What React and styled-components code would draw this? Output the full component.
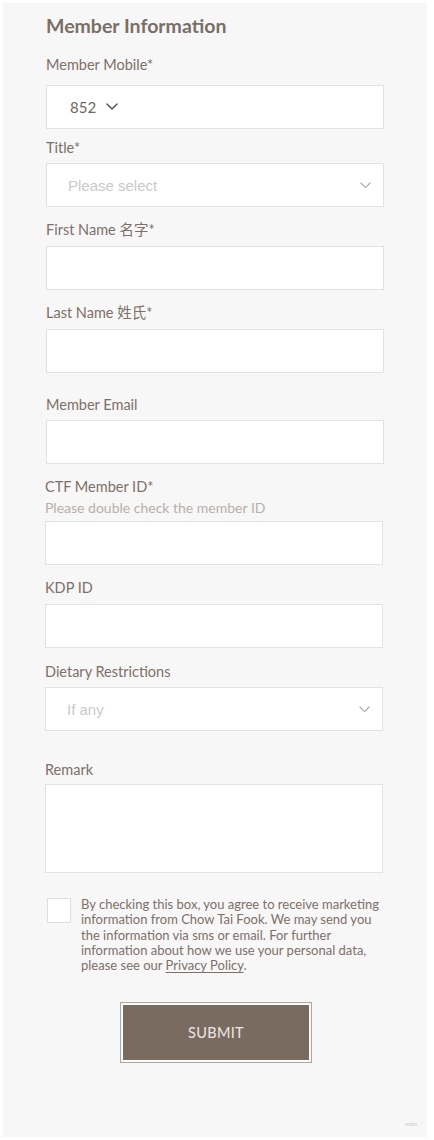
import styled, { createGlobalStyle } from "styled-components";

const Global = createGlobalStyle`
    html, body {
        margin: 0;
        padding: 0;
        background: #ffffff;
    }
    * {
        box-sizing: border-box;
    }
`;

const Pagina = styled.div`
    padding: 3px 7px 3px 3px;
`;

const Panel = styled.div`
    position: relative;
    background: #f7f7f7;
    height: 1134px;
    padding: 11px 0 0 43px;
    font-family: "Lato", "Noto Sans CJK SC", sans-serif;
    color: #7d7069;
`;

const Titulo = styled.h2`
    margin: 0;
    font-size: 19.5px;
    line-height: 24px;
    font-weight: 700;
    color: #7a6e67;
`;

const Campo = styled.div`
    margin-top: ${({ $top }) => $top}px;
    margin-left: ${({ $shift }) => $shift || 0}px;
    width: 338px;
`;

const Etiqueta = styled.div`
    font-size: 14.5px;
    line-height: 20px;
    margin-bottom: ${({ $bottom }) => $bottom}px;
`;

const Ayuda = styled.div`
    font-size: 14px;
    line-height: 20px;
    color: #b9afa9;
    margin-bottom: 3px;
`;

const Entrada = styled.input`
    display: block;
    width: 100%;
    height: 44px;
    background: #ffffff;
    border: 1px solid #e2e2e2;
    border-radius: 0;
    outline: none;
    padding: 0 20px;
    font-family: "Liberation Sans", sans-serif;
    font-size: 15px;
`;

const AreaTexto = styled.textarea`
    display: block;
    width: 100%;
    height: 89px;
    background: #ffffff;
    border: 1px solid #e2e2e2;
    border-radius: 0;
    outline: none;
    resize: none;
    padding: 10px 20px;
`;

const Selector = styled.div`
    display: flex;
    align-items: center;
    justify-content: ${({ $compact }) => ($compact ? "flex-start" : "space-between")};
    gap: 10px;
    height: 44px;
    background: #ffffff;
    border: 1px solid #e2e2e2;
    padding: ${({ $compact }) => ($compact ? "0 0 0 23px" : "0 12px 0 21px")};
`;

const Marcador = styled.span`
    font-family: "Liberation Sans", sans-serif;
    font-size: 15px;
    color: #c9c9c9;
`;

const Codigo = styled.span`
    font-family: "Lato", sans-serif;
    font-size: 15px;
    color: #6f6661;
`;

const Consentimiento = styled.label`
    display: flex;
    align-items: flex-start;
    gap: 10px;
    margin-top: 25px;
    margin-left: 1px;
`;

const Casilla = styled.span`
    flex: none;
    width: 24px;
    height: 25px;
    background: #ffffff;
    border: 1px solid #dedede;
`;

const TextoLegal = styled.p`
    margin: -1px 0 0;
    font-size: 13px;
    line-height: 15.3px;
    white-space: nowrap;
    color: #7d7069;
`;

const Enlace = styled.a`
    color: inherit;
    text-decoration: underline;
    text-underline-offset: 2px;
`;

const ZonaBoton = styled.div`
    display: flex;
    justify-content: center;
    margin: 31px 0 0 -43px;
    padding-left: 2px;
`;

const Boton = styled.button`
    width: 188px;
    height: 57px;
    background: #7a6b61;
    border: 1px solid #ffffff;
    outline: 1px solid #b1a79f;
    outline-offset: 1px;
    color: #ece7e3;
    font-family: "Lato", sans-serif;
    font-size: 14.5px;
    letter-spacing: 0.3px;
    cursor: pointer;
`;

const Marca = styled.span`
    position: absolute;
    right: 10px;
    bottom: 10px;
    font-family: "Liberation Sans", sans-serif;
    font-size: 6px;
    color: #c6c6c6;
`;

function Chevron({ color = "#a9a9a9", size = 11, stroke = 1.2 }) {
    return (
        <svg width={size} height={size * 0.6} viewBox="0 0 12 7" fill="none">
            <path d="M1 1l5 5 5-5" stroke={color} strokeWidth={stroke} strokeLinecap="round" strokeLinejoin="round" />
        </svg>
    );
}

export default function App() {
    return (
        <Pagina>
            <Global />
            <Panel>
                <Titulo>Member Information</Titulo>

                <Campo $top={17}>
                    <Etiqueta $bottom={10}>Member Mobile*</Etiqueta>
                    <Selector $compact>
                        <Codigo>852</Codigo>
                        <Chevron color="#5f5652" size={12} stroke={1.5} />
                    </Selector>
                </Campo>

                <Campo $top={9}>
                    <Etiqueta $bottom={5}>Title*</Etiqueta>
                    <Selector>
                        <Marcador>Please select</Marcador>
                        <Chevron />
                    </Selector>
                </Campo>

                <Campo $top={13}>
                    <Etiqueta $bottom={6}>First Name 名字*</Etiqueta>
                    <Entrada type="text" />
                </Campo>

                <Campo $top={13}>
                    <Etiqueta $bottom={6}>Last Name 姓氏*</Etiqueta>
                    <Entrada type="text" />
                </Campo>

                <Campo $top={22}>
                    <Etiqueta $bottom={5}>Member Email</Etiqueta>
                    <Entrada type="email" />
                </Campo>

                <Campo $top={13} $shift={-1}>
                    <Etiqueta $bottom={1}>CTF Member ID*</Etiqueta>
                    <Ayuda>Please double check the member ID</Ayuda>
                    <Entrada type="text" />
                </Campo>

                <Campo $top={13} $shift={-1}>
                    <Etiqueta $bottom={6}>KDP ID</Etiqueta>
                    <Entrada type="text" />
                </Campo>

                <Campo $top={14} $shift={-1}>
                    <Etiqueta $bottom={5}>Dietary Restrictions</Etiqueta>
                    <Selector>
                        <Marcador>If any</Marcador>
                        <Chevron />
                    </Selector>
                </Campo>

                <Campo $top={29} $shift={-1}>
                    <Etiqueta $bottom={4}>Remark</Etiqueta>
                    <AreaTexto />
                </Campo>

                <Consentimiento>
                    <Casilla />
                    <TextoLegal>
                        By checking this box, you agree to receive marketing
                        <br />
                        information from Chow Tai Fook. We may send you
                        <br />
                        the information via sms or email. For further
                        <br />
                        information about how we use your personal data,
                        <br />
                        please see our <Enlace href="#">Privacy Policy</Enlace>.
                    </TextoLegal>
                </Consentimiento>

                <ZonaBoton>
                    <Boton type="button">SUBMIT</Boton>
                </ZonaBoton>

                <Marca>miro</Marca>
            </Panel>
        </Pagina>
    );
}
